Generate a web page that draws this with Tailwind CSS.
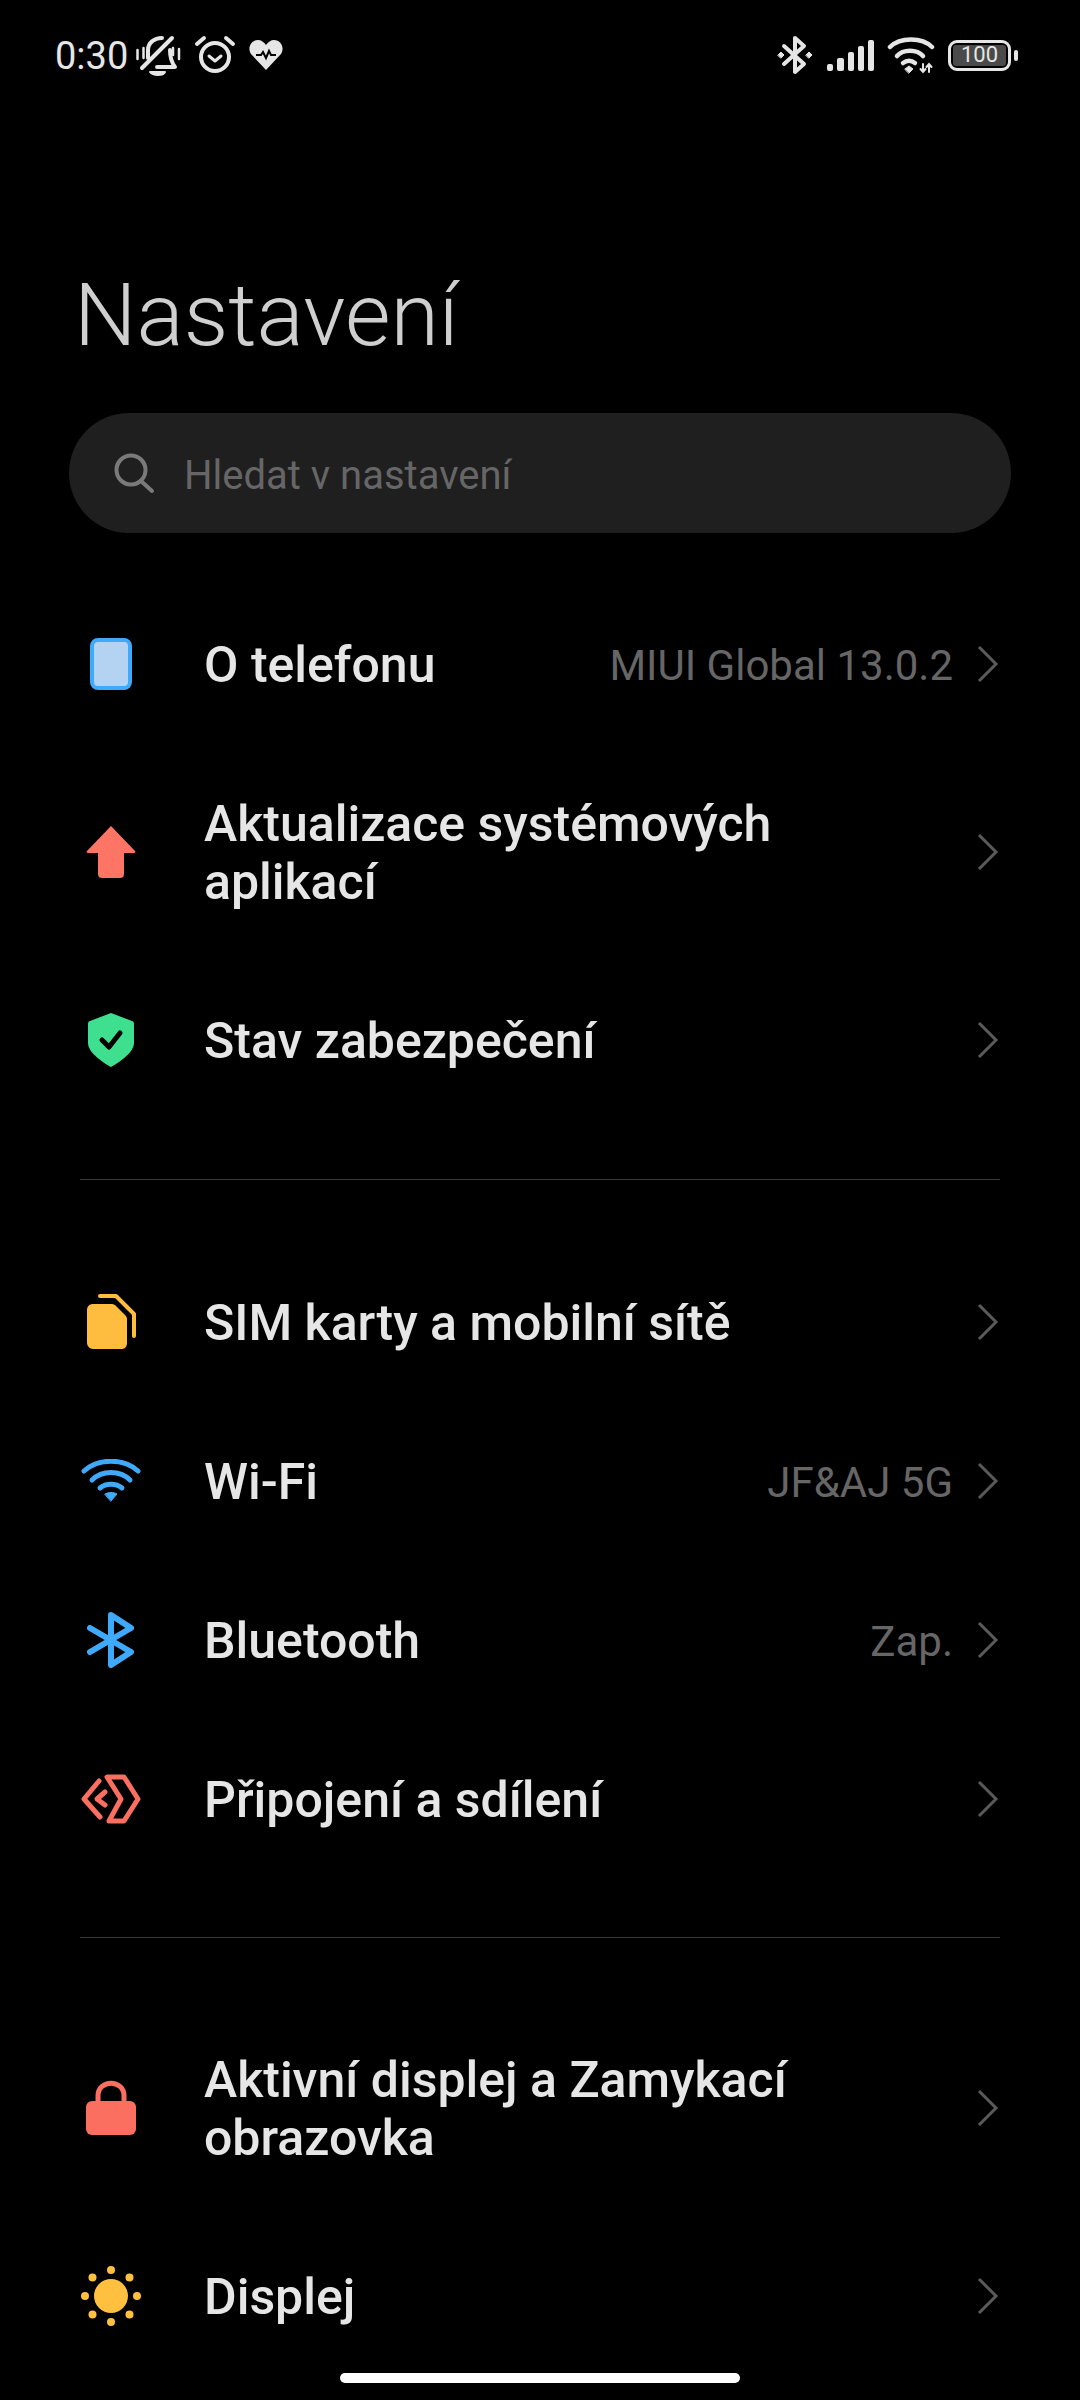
<!DOCTYPE html>
<html lang="cs">
<head>
    <meta charset="utf-8">
    <title>Nastavení</title>
    <script src="https://cdn.jsdelivr.net/npm/@tailwindcss/browser@4"></script>
</head>
<body class="bg-black font-['Roboto',sans-serif] w-[1080px] h-[2400px] overflow-hidden relative text-[#e6e6e6]">

    <!-- status bar -->
    <div class="h-[110px] flex items-center justify-between pl-[55px] pr-[62px]">
        <div class="flex items-center">
            <span class="text-[38px] leading-none text-[#e6e6e6] w-[81px] mt-[2px]">0:30</span>
            <svg class="w-[48px] h-[48px]" viewBox="0 0 48 48" fill="none" stroke="#e6e6e6" stroke-linecap="round" stroke-linejoin="round">
                <path d="M12 27 V19 C12 12 18 7 26 7" stroke-width="4"/>
                <path d="M34 19 C34 26 36 32 39 36 H21" stroke-width="4"/>
                <path d="M6 37 L36 7" stroke-width="4"/>
                <path d="M14 41 H29 C27 45 17 45 14 41 Z" fill="#e6e6e6" stroke-width="2"/>
                <path d="M1.5 19 V28 M7.5 17 V27 M37 17 V24 M43 18 V28" stroke-width="2.5"/>
            </svg>
            <svg class="w-[42px] h-[42px] ml-[10px]" viewBox="0 0 42 42" fill="none" stroke="#e6e6e6" stroke-linecap="round" stroke-linejoin="round">
                <circle cx="21" cy="23" r="14" stroke-width="4"/>
                <path d="M15 22 L21 27 L27 22" stroke-width="3"/>
                <path d="M3 10 L10 4 M39 10 L32 4" stroke-width="4"/>
            </svg>
            <svg class="w-[36px] h-[36px] ml-[12px]" viewBox="0 0 36 36">
                <path d="M18 33 L3 17 C-1 11 3 3 10 3 C13 3 16 5 18 8 C20 5 23 3 26 3 C33 3 37 11 33 17 Z" fill="#e6e6e6"/>
                <path d="M8 18 H13 L15 15 L18 21 L21 14 L23 18 H28" fill="none" stroke="#000" stroke-width="2"/>
            </svg>
        </div>
        <div class="flex items-center">
            <svg class="w-[38px] h-[42px]" viewBox="0 0 38 42" fill="none" stroke="#e6e6e6" stroke-width="4" stroke-linecap="round" stroke-linejoin="round">
                <path d="M8 12 L28 30 L19 38 V4 L28 12 L8 30"/>
                <path d="M2 21 L5 18 L8 21 L5 24 Z M30 21 L33 18 L36 21 L33 24 Z" fill="#e6e6e6" stroke-width="1"/>
            </svg>
            <svg class="w-[50px] h-[32px] ml-[12px]" viewBox="0 0 50 32" fill="#e6e6e6">
                <rect x="1" y="25" width="6" height="7" rx="2"/>
                <rect x="11" y="19" width="7" height="13" rx="2"/>
                <rect x="22" y="13" width="6" height="19" rx="2"/>
                <rect x="32" y="7" width="6" height="25" rx="2"/>
                <rect x="42" y="1" width="6" height="31" rx="2"/>
            </svg>
            <svg class="w-[48px] h-[38px] ml-[11px]" viewBox="0 0 48 38" fill="none" stroke="#e6e6e6" stroke-width="4.5" stroke-linecap="round">
                <path d="M3 11 C13 1 35 1 45 11"/>
                <path d="M10 20 C16 13 30 13 36 20"/>
                <path d="M16 27 C20 24 24 24 28 27"/>
                <path d="M18 33 L22 30 L26 33 L22 37 Z" fill="#e6e6e6" stroke-width="1"/>
                <path d="M36 28 V36 M33.5 33 L36 36 L38.5 33 M42 36 V28 M39.5 31 L42 28 L44.5 31" stroke-width="2"/>
            </svg>
            <div class="ml-[13px] w-[63px] h-[31px] border-[3px] border-[#e6e6e6] rounded-[9px] p-[2px] flex">
                <div class="w-full bg-[#4a4a4a] rounded-[3px] flex items-center justify-center text-[22px] leading-none text-[#e6e6e6]">100</div>
            </div>
            <div class="ml-[3px] w-[4px] h-[11px] bg-[#e6e6e6] rounded-[2px]"></div>
        </div>
    </div>

    <h1 class="mt-[161px] ml-[74px] text-[88px] leading-[88px] h-[88px] font-light text-[#cfcfcf]">Nastavení</h1>

    <!-- search -->
    <div class="mt-[54px] mx-[69px] h-[120px] rounded-full bg-[#1f1f1f] flex items-center pl-[44px]">
        <svg class="w-[42px] h-[42px]" viewBox="0 0 42 42" fill="none" stroke="#7a7a7a" stroke-width="4" stroke-linecap="round">
            <circle cx="18" cy="18" r="14.5"/>
            <path d="M28 29 L39 39"/>
        </svg>
        <span class="ml-[29px] pt-[6px] text-[40px] text-[#666666]">Hledat v nastavení</span>
    </div>

    <!-- section 1 -->
    <div class="mt-[51px]">
        <div class="h-[159px] flex items-center pl-[80px] pr-[81px]">
            <div class="w-[62px] flex justify-center">
                <svg class="w-[42px] h-[52px]" viewBox="0 0 42 52">
                    <rect x="2" y="2" width="38" height="48" rx="6" fill="#b4d3f2" stroke="#3fa9fb" stroke-width="4"/>
                </svg>
            </div>
            <div class="ml-[62px] pt-[3px] flex-1 text-[50px] leading-[58px] font-medium">O telefonu</div>
            <div class="pt-[3px] text-[42px] text-[#666666] mr-[24px]">MIUI Global 13.0.2</div>
            <svg class="w-[22px] h-[38px]" viewBox="0 0 22 38" fill="none" stroke="#5a5a5a" stroke-width="3"><path d="M2 2 L19 19 L2 36"/></svg>
        </div>
        <div class="h-[217px] flex items-center pl-[80px] pr-[81px]">
            <div class="w-[62px] flex justify-center">
                <svg class="w-[50px] h-[54px]" viewBox="0 0 50 54"><path d="M25 1 L49 26 C50 27 49 28 48 28 H38 V49 C38 52 36 53 34 53 H16 C14 53 12 52 12 49 V28 H2 C1 28 0 27 1 26 Z" fill="#ff7565"/></svg>
            </div>
            <div class="ml-[62px] pt-[3px] flex-1 text-[50px] leading-[58px] font-medium">Aktualizace systémových<br>aplikací</div>
            <svg class="w-[22px] h-[38px]" viewBox="0 0 22 38" fill="none" stroke="#5a5a5a" stroke-width="3"><path d="M2 2 L19 19 L2 36"/></svg>
        </div>
        <div class="h-[159px] flex items-center pl-[80px] pr-[81px]">
            <div class="w-[62px] flex justify-center">
                <svg class="w-[46px] h-[54px]" viewBox="0 0 46 54">
                    <path d="M23 0 L44 8 C45 8 46 9 46 11 V30 C46 40 30 50 23 54 C16 50 0 40 0 30 V11 C0 9 1 8 2 8 Z" fill="#3ee08f"/>
                    <path d="M14 27 L21 34 L32 20" fill="none" stroke="#000" stroke-width="5" stroke-linecap="round" stroke-linejoin="round"/>
                </svg>
            </div>
            <div class="ml-[62px] pt-[3px] flex-1 text-[50px] leading-[58px] font-medium">Stav zabezpečení</div>
            <svg class="w-[22px] h-[38px]" viewBox="0 0 22 38" fill="none" stroke="#5a5a5a" stroke-width="3"><path d="M2 2 L19 19 L2 36"/></svg>
        </div>
    </div>

    <div class="mt-[60px] mb-[62px] mx-[80px] h-[1px] bg-[#383838]"></div>

    <!-- section 2 -->
    <div>
        <div class="h-[159px] flex items-center pl-[81px] pr-[81px]">
            <div class="w-[62px] flex justify-center">
                <svg class="w-[52px] h-[56px]" viewBox="0 0 52 56">
                    <path d="M7 10 H26 C28 10 29 11 30 12 L39 21 C40 22 41 23 41 25 V49 C41 52 39 55 36 55 H7 C4 55 1 52 1 49 V16 C1 12 4 10 7 10 Z" fill="#ffbd3f"/>
                    <path d="M14 2 H30 L48 20 V42" fill="none" stroke="#ffbd3f" stroke-width="4" stroke-linecap="round" stroke-linejoin="round"/>
                </svg>
            </div>
            <div class="ml-[61px] pt-[3px] flex-1 text-[50px] leading-[58px] font-medium">SIM karty a mobilní sítě</div>
            <svg class="w-[22px] h-[38px]" viewBox="0 0 22 38" fill="none" stroke="#5a5a5a" stroke-width="3"><path d="M2 2 L19 19 L2 36"/></svg>
        </div>
        <div class="h-[159px] flex items-center pl-[80px] pr-[81px]">
            <div class="w-[62px] flex justify-center">
                <svg class="w-[60px] h-[44px]" viewBox="0 0 60 44" fill="none" stroke="#3fa9fb" stroke-width="5" stroke-linecap="round">
                    <path d="M3 12 C17 -1 43 -1 57 12"/>
                    <path d="M11 21 C21 11 39 11 49 21"/>
                    <path d="M19 29 C25 24 35 24 41 29"/>
                    <path d="M24 35 C27 33 33 33 36 35 L30 42 Z" fill="#3fa9fb" stroke-width="1" stroke-linejoin="round"/>
                </svg>
            </div>
            <div class="ml-[62px] pt-[3px] flex-1 text-[50px] leading-[58px] font-medium">Wi-Fi</div>
            <div class="pt-[3px] text-[42px] text-[#666666] mr-[24px]">JF&amp;AJ 5G</div>
            <svg class="w-[22px] h-[38px]" viewBox="0 0 22 38" fill="none" stroke="#5a5a5a" stroke-width="3"><path d="M2 2 L19 19 L2 36"/></svg>
        </div>
        <div class="h-[159px] flex items-center pl-[80px] pr-[81px]">
            <div class="w-[62px] flex justify-center">
                <svg class="w-[48px] h-[56px]" viewBox="0 0 48 56" fill="none" stroke="#3fa9fb" stroke-width="6" stroke-linecap="round" stroke-linejoin="round">
                    <path d="M3 16 L44 40 L24 53 V3 L44 16 L3 40"/>
                </svg>
            </div>
            <div class="ml-[62px] pt-[3px] flex-1 text-[50px] leading-[58px] font-medium">Bluetooth</div>
            <div class="pt-[3px] text-[42px] text-[#666666] mr-[24px]">Zap.</div>
            <svg class="w-[22px] h-[38px]" viewBox="0 0 22 38" fill="none" stroke="#5a5a5a" stroke-width="3"><path d="M2 2 L19 19 L2 36"/></svg>
        </div>
        <div class="h-[159px] flex items-center pl-[80px] pr-[81px]">
            <div class="w-[62px] flex justify-center">
                <svg class="w-[60px] h-[50px]" viewBox="0 0 60 50" fill="none" stroke="#fa6f5f" stroke-width="5" stroke-linecap="round" stroke-linejoin="round">
                    <path d="M26 3 H43 L57 25 L43 47 H28 L40 25 Z"/>
                    <path d="M18 7 L3 25 L19 43"/>
                    <path d="M24 18 L16 25 L24 31"/>
                </svg>
            </div>
            <div class="ml-[62px] pt-[3px] flex-1 text-[50px] leading-[58px] font-medium">Připojení a sdílení</div>
            <svg class="w-[22px] h-[38px]" viewBox="0 0 22 38" fill="none" stroke="#5a5a5a" stroke-width="3"><path d="M2 2 L19 19 L2 36"/></svg>
        </div>
    </div>

    <div class="mt-[59px] mb-[61px] mx-[80px] h-[1px] bg-[#383838]"></div>

    <!-- section 3 -->
    <div>
        <div class="h-[217px] flex items-center pl-[80px] pr-[81px]">
            <div class="w-[62px] flex justify-center">
                <svg class="w-[50px] h-[56px]" viewBox="0 0 50 56">
                    <path d="M12 24 V16 C12 -1 38 -1 38 16 V24" fill="none" stroke="#fa6f5f" stroke-width="5"/>
                    <rect x="0" y="21" width="50" height="34" rx="6" fill="#fa6f5f"/>
                </svg>
            </div>
            <div class="ml-[62px] pt-[3px] flex-1 text-[50px] leading-[58px] font-medium">Aktivní displej a Zamykací<br>obrazovka</div>
            <svg class="w-[22px] h-[38px]" viewBox="0 0 22 38" fill="none" stroke="#5a5a5a" stroke-width="3"><path d="M2 2 L19 19 L2 36"/></svg>
        </div>
        <div class="h-[159px] flex items-center pl-[80px] pr-[81px]">
            <div class="w-[62px] flex justify-center">
                <svg class="w-[60px] h-[60px]" viewBox="0 0 60 60" fill="#ffc03f">
                    <circle cx="30" cy="30" r="17"/>
                    <circle cx="30" cy="4" r="4"/><circle cx="30" cy="56" r="4"/>
                    <circle cx="4" cy="30" r="4"/><circle cx="56" cy="30" r="4"/>
                    <circle cx="11.5" cy="11.5" r="4"/><circle cx="48.5" cy="11.5" r="4"/>
                    <circle cx="11.5" cy="48.5" r="4"/><circle cx="48.5" cy="48.5" r="4"/>
                </svg>
            </div>
            <div class="ml-[62px] pt-[3px] flex-1 text-[50px] leading-[58px] font-medium">Displej</div>
            <svg class="w-[22px] h-[38px]" viewBox="0 0 22 38" fill="none" stroke="#5a5a5a" stroke-width="3"><path d="M2 2 L19 19 L2 36"/></svg>
        </div>
    </div>

    <!-- home indicator -->
    <div class="absolute left-[340px] top-[2373px] w-[400px] h-[10px] rounded-full bg-white"></div>
</body>
</html>
